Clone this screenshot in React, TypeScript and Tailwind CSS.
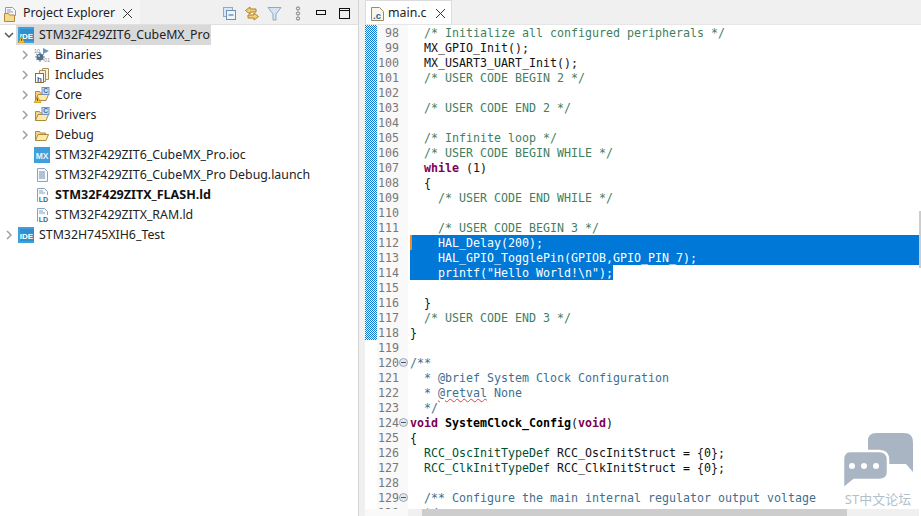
import React from 'react';

const uiFont = 'font-["Noto_Sans","Open_Sans",sans-serif]';

type Tok = [string, string?];

const C = 'text-[#3f7f5f]';
const D = 'text-[#3f6f8f]';
const K = 'font-bold text-[#7f0055]';
const T = 'text-[#005032]';
const B = 'font-bold';

// editor content, line 98 to line 130
const lines: Tok[][] = [
  [['  /* Initialize all configured peripherals */', C]],
  [['  MX_GPIO_Init();']],
  [['  MX_USART3_UART_Init();']],
  [['  /* USER CODE BEGIN 2 */', C]],
  [],
  [['  /* USER CODE END 2 */', C]],
  [],
  [['  /* Infinite loop */', C]],
  [['  /* USER CODE BEGIN WHILE */', C]],
  [['  '], ['while', K], [' (1)']],
  [['  {']],
  [['    /* USER CODE END WHILE */', C]],
  [],
  [['    /* USER CODE BEGIN 3 */', C]],
  [['    HAL_Delay(200);']],
  [['    HAL_GPIO_TogglePin(GPIOB,GPIO_PIN_7);']],
  [['    printf("Hello World!\\n");']],
  [],
  [['  }']],
  [['  /* USER CODE END 3 */', C]],
  [['}']],
  [],
  [['/**', D]],
  [['  * @brief System Clock Configuration', D]],
  [['  * ', D], ['@retval', 'text-[#3f6f8f] underline decoration-wavy decoration-[#e04040] decoration-1'], [' None', D]],
  [['  */', D]],
  [['void', K], [' '], ['SystemClock_Config', B], ['('], ['void', K], [')']],
  [['{']],
  [['  '], ['RCC_OscInitTypeDef', T], [' RCC_OscInitStruct = {0};']],
  [['  '], ['RCC_ClkInitTypeDef', T], [' RCC_ClkInitStruct = {0};']],
  [],
  [['  /** Configure the main internal regulator output voltage', D]],
  [['  */', D]],
];

const folds = [120, 124, 129];

function Chevron({ open }: { open?: boolean }) {
  return (
    <svg width="10" height="10" viewBox="0 0 10 10" fill="none" stroke={open ? '#555' : '#a0a0a0'} strokeWidth="1.5">
      {open ? <path d="M1 3l4 4 4-4" /> : <path d="M3 1l4 4-4 4" />}
    </svg>
  );
}

function Warn() {
  return (
    <g>
      <path d="M3.5 9.5L7 16H0z" fill="#f5c33b" stroke="#a87a10" strokeWidth="0.6" />
      <rect x="3.1" y="11.5" width="0.9" height="2.4" fill="#5a3d00" />
    </g>
  );
}

function IdeIcon({ warn }: { warn?: boolean }) {
  return (
    <svg width="16" height="16" viewBox="0 0 16 16">
      <rect x="0" y="0" width="16" height="16" fill="#3f9fdc" />
      <rect x="2" y="2" width="14" height="12" fill="#2f8fd0" />
      <text x="8.5" y="12" fontSize="8" fontWeight="700" fill="#fff" textAnchor="middle" fontFamily="Liberation Sans, sans-serif">IDE</text>
      {warn && <Warn />}
    </svg>
  );
}

function MxIcon() {
  return (
    <svg width="16" height="16" viewBox="0 0 16 16">
      <rect x="0" y="0" width="16" height="16" fill="#3f9fdc" />
      <text x="8" y="12" fontSize="8.5" fontWeight="700" fill="#e8f4fc" textAnchor="middle" fontFamily="Liberation Sans, sans-serif">MX</text>
    </svg>
  );
}

function BinariesIcon() {
  return (
    <svg width="16" height="16" viewBox="0 0 16 16">
      <text x="0" y="6" fontSize="5.5" fill="#8a8a8a" fontFamily="Liberation Sans, sans-serif">10</text>
      <text x="10" y="15" fontSize="5.5" fill="#8a8a8a" fontFamily="Liberation Sans, sans-serif">01</text>
      <path d="M9 1v6l6-3z" fill="#6f93c0" />
      <circle cx="6" cy="10" r="3.5" fill="#55708a" />
      <path d="M2 7l8 6M2 13l8-6M1 10h10M6 5v10" stroke="#55708a" strokeWidth="0.8" />
      <circle cx="5" cy="9" r="1" fill="#c9d6e2" />
    </svg>
  );
}

function IncludesIcon() {
  return (
    <svg width="16" height="16" viewBox="0 0 16 16">
      <path d="M8.5 1.5h6v11h-6z" fill="#f7efd8" stroke="#a8905a" />
      <path d="M5.5 3.5h6v11h-6z" fill="#f7efd8" stroke="#a8905a" />
      <rect x="1.5" y="6.5" width="8" height="9" fill="#fff" stroke="#8a6f3a" />
      <text x="5.5" y="14.5" fontSize="8" fontWeight="700" fill="#3a5f8a" textAnchor="middle" fontFamily="Liberation Sans, sans-serif">h</text>
    </svg>
  );
}

function FolderIcon({ src, warn }: { src?: boolean; warn?: boolean }) {
  return (
    <svg width="16" height="16" viewBox="0 0 16 16">
      <path d="M1.5 13.5v-9h4l1 1.5h5v2" fill="#f2d58c" stroke="#b08a3a" />
      <path d="M1.5 13.5l2.5-6h10.5l-2.5 6z" fill="#fbe9ae" stroke="#b08a3a" />
      {src && (
        <g>
          <rect x="8" y="0.5" width="7" height="7" fill="#cfe0f2" stroke="#6f93c0" />
          <text x="11.5" y="6.4" fontSize="6.5" fontWeight="700" fill="#3a64a0" textAnchor="middle" fontFamily="Liberation Sans, sans-serif">C</text>
        </g>
      )}
      {warn && <Warn />}
    </svg>
  );
}

function DocIcon() {
  return (
    <svg width="16" height="16" viewBox="0 0 16 16" fill="none">
      <path d="M3.5 1.5h7l3 3v10h-10z" fill="#f6f9fd" stroke="#8ca3bf" />
      <path d="M5 5h6M5 7h6M5 9h6M5 11h6" stroke="#6f87a6" />
    </svg>
  );
}

function LdIcon() {
  return (
    <svg width="16" height="16" viewBox="0 0 16 16" fill="none">
      <path d="M3.5 1.5h7l3 3v10h-10z" fill="#f6f9fd" stroke="#8ca3bf" />
      <path d="M5 4h4M5 6h6" stroke="#8ca3bf" />
      <rect x="4" y="8" width="11" height="8" fill="#fff" />
      <text x="9.5" y="15" fontSize="7" fontWeight="700" fill="#2f6d9e" textAnchor="middle" fontFamily="Liberation Sans, sans-serif">LD</text>
    </svg>
  );
}

function PackageIcon() {
  return (
    <svg width="16" height="16" viewBox="0 0 16 16">
      <path d="M2.5 1.5h7l3 3v5h-10z" fill="#f7f8fb" stroke="#8c9bb0" />
      <path d="M4 4h4M4 6h6" stroke="#8c9bb0" />
      <path d="M1.5 15.5v-8h4l1 1.5h5v6.5z" fill="#f4d98f" stroke="#b08a3a" />
    </svg>
  );
}

function CFileIcon() {
  return (
    <svg width="15" height="16" viewBox="0 0 15 16">
      <path d="M1.5 1.5h8l4 4v9h-12z" fill="#f8f5ea" stroke="#a08c5a" />
      <text x="7" y="12.5" fontSize="9.5" fontWeight="700" fill="#2f5f9a" textAnchor="middle" fontFamily="Liberation Sans, sans-serif">.c</text>
    </svg>
  );
}

function CloseX() {
  return (
    <svg width="11" height="11" viewBox="0 0 11 11" stroke="#333" strokeWidth="1" fill="none">
      <path d="M1 1l9 9M10 1l-9 9" />
    </svg>
  );
}

function Checker({ no }: { no: number }) {
  const id = `chk${no}`;
  return (
    <svg className="block shrink-0" width="12" height="15" shapeRendering="crispEdges">
      <defs>
        <pattern id={id} width="2" height="2" patternUnits="userSpaceOnUse" patternTransform={`translate(0 ${no % 2})`}>
          <rect width="2" height="2" fill="#fff" />
          <rect width="1" height="1" fill="#0a78d2" />
          <rect x="1" y="1" width="1" height="1" fill="#0a78d2" />
        </pattern>
      </defs>
      <rect width="12" height="15" fill={`url(#${id})`} />
    </svg>
  );
}

function TreeRow({ depth, arrow, icon, label, bold, selected }: {
  depth: number;
  arrow?: 'open' | 'closed';
  icon: React.ReactNode;
  label: string;
  bold?: boolean;
  selected?: boolean;
}) {
  return (
    <div className={`flex h-5 items-center ${depth ? 'pl-[20px]' : 'pl-[4px]'}`}>
      <span className="flex w-[12px] shrink-0 items-center">
        {arrow && <Chevron open={arrow === 'open'} />}
      </span>
      <div className={`flex h-5 items-center pl-[2px] pr-[1px] ${selected ? 'bg-[#d9d9d9]' : ''}`}>
        <span className="flex w-[21px] shrink-0 items-center">{icon}</span>
        <span className={`whitespace-pre ${bold ? 'text-[12.55px] font-bold text-[#111]' : 'text-[12.35px] text-[#222]'}`}>{label}</span>
      </div>
    </div>
  );
}

function ProjectExplorer() {
  return (
    <div className={`flex w-[359px] shrink-0 flex-col border-r border-[#d4d4d4] bg-white ${uiFont}`}>
      <div className="flex h-[25px] shrink-0 items-center border-b border-[#e0e0e0] bg-[#f0f0f0]">
        <div className="flex h-full w-[140px] items-center bg-[#f5f5f5] pl-[3px] pt-[3px]">
          <PackageIcon />
          <span className="ml-[4px] whitespace-pre text-[12.35px] text-[#222]">Project Explorer</span>
          <span className="ml-[7px]"><CloseX /></span>
        </div>
        <div className="ml-[82px] flex items-center pt-[2px]">
          <svg width="15" height="15" viewBox="0 0 15 15" fill="none">
            <rect x="1.5" y="1.5" width="9" height="9" fill="#dbe7f4" stroke="#8fa9c8" />
            <rect x="4.5" y="4.5" width="9" height="9" fill="#eef4fb" stroke="#6f8fb8" />
            <path d="M6.5 9h5" stroke="#3f638f" />
          </svg>
          <svg className="ml-[7px]" width="16" height="15" viewBox="0 0 16 15" fill="#f3cf7a" stroke="#b5801f">
            <path d="M6 1L1.5 4.5 6 8V6h6V3H6z" />
            <path d="M10 7l4.5 3.5L10 14v-2H4V9h6z" />
          </svg>
          <svg className="ml-[7px]" width="15" height="15" viewBox="0 0 15 15" fill="#d5e3f2" stroke="#8fa9c8">
            <path d="M1 1.5h13L9 8v6H6V8z" />
          </svg>
          <svg className="ml-[13px]" width="6" height="15" viewBox="0 0 6 15" fill="none" stroke="#777">
            <circle cx="3" cy="2.5" r="1.6" />
            <circle cx="3" cy="7.5" r="1.6" />
            <circle cx="3" cy="12.5" r="1.6" />
          </svg>
          <svg className="ml-[15px]" width="10" height="6" viewBox="0 0 10 6" fill="none" stroke="#111">
            <rect x="0.5" y="0.5" width="9" height="4" />
          </svg>
          <svg className="ml-[13px]" width="11" height="11" viewBox="0 0 11 11" fill="none" stroke="#111">
            <rect x="0.5" y="0.5" width="10" height="10" />
            <path d="M0 2.5h11" />
          </svg>
        </div>
      </div>
      <div className="flex flex-col">
        <TreeRow depth={0} arrow="open" selected icon={<IdeIcon warn />} label="STM32F429ZIT6_CubeMX_Pro" />
        <TreeRow depth={1} arrow="closed" icon={<BinariesIcon />} label="Binaries" />
        <TreeRow depth={1} arrow="closed" icon={<IncludesIcon />} label="Includes" />
        <TreeRow depth={1} arrow="closed" icon={<FolderIcon src warn />} label="Core" />
        <TreeRow depth={1} arrow="closed" icon={<FolderIcon src />} label="Drivers" />
        <TreeRow depth={1} arrow="closed" icon={<FolderIcon />} label="Debug" />
        <TreeRow depth={1} icon={<MxIcon />} label="STM32F429ZIT6_CubeMX_Pro.ioc" />
        <TreeRow depth={1} icon={<DocIcon />} label="STM32F429ZIT6_CubeMX_Pro Debug.launch" />
        <TreeRow depth={1} bold icon={<LdIcon />} label="STM32F429ZITX_FLASH.ld" />
        <TreeRow depth={1} icon={<LdIcon />} label="STM32F429ZITX_RAM.ld" />
        <TreeRow depth={0} arrow="closed" icon={<IdeIcon />} label="STM32H745XIH6_Test" />
      </div>
    </div>
  );
}

function CodeLine({ no, toks }: { no: number; toks: Tok[] }) {
  const full = no === 112 || no === 113;
  const part = no === 114;
  const sel = full || part;
  return (
    <div className="flex h-[15px] shrink-0 leading-[17px]">
      {no <= 118 ? <Checker no={no} /> : <div className="w-[12px] shrink-0" />}
      <div className="relative flex w-[31px] shrink-0 justify-end bg-[#f9f9f9] pr-[9px] text-[#787878]">
        {no}
        {folds.includes(no) && (
          <svg className="absolute right-0 top-[3px]" width="9" height="9" viewBox="0 0 9 9">
            <circle cx="4.5" cy="4.5" r="4" fill="#e4e8ee" stroke="#9aa8b8" />
            <path d="M2 4.5h5" stroke="#44546a" />
          </svg>
        )}
      </div>
      <div className="w-[2px] shrink-0 bg-white" />
      <div className={`relative flex-1 whitespace-pre ${full ? 'bg-[#0078d7]' : ''}`}>
        <span className={part ? 'inline-block h-[15px] bg-[#0078d7] align-top' : ''}>
          {toks.map((t, i) => (
            <span key={i} className={sel ? 'text-white' : t[1] ?? 'text-[#111]'}>{t[0]}</span>
          ))}
        </span>
        {no === 112 && <div className="absolute bottom-0 left-0 top-0 w-[2px] bg-[#f08a24]" />}
      </div>
    </div>
  );
}

function Editor() {
  return (
    <div className="flex min-w-0 flex-1 flex-col bg-white">
      <div className={`flex h-[25px] shrink-0 items-stretch border-b border-[#e6e6e6] bg-[#f0f0f0] ${uiFont}`}>
        <div className="flex w-[87px] items-center border-x border-t border-[#dcdcdc] bg-white pl-[4px] pt-[2px]">
          <CFileIcon />
          <span className="ml-[3px] text-[12.35px] text-[#222]">main.c</span>
          <span className="ml-[8px]"><CloseX /></span>
        </div>
      </div>
      <div className="flex min-h-0 flex-1">
        <div className="flex min-w-0 flex-1 flex-col">
          <div className="flex min-h-0 flex-1 flex-col overflow-hidden font-['DejaVu_Sans_Mono',monospace] text-[11.63px]">
            {lines.map((toks, i) => (
              <CodeLine key={i} no={98 + i} toks={toks} />
            ))}
          </div>
          <div className="flex h-[7px] shrink-0">
            <div className="w-[43px] shrink-0 bg-[#f9f9f9]" />
            <div className="flex flex-1 overflow-hidden bg-[#f0f0f0]">
              <div className="w-[14px] shrink-0" />
              <div className="w-[425px] bg-[#cdcdcd]" />
            </div>
          </div>
        </div>
        <div className="flex w-[2px] shrink-0 flex-col">
          <div className="h-[186px] bg-white" />
          <div className="h-[57px] bg-[#cdcdcd]" />
        </div>
      </div>
    </div>
  );
}

function Watermark() {
  return (
    <div className="absolute bottom-[9px] right-[7px] flex w-[72px] flex-col items-center">
      <svg width="72" height="56" viewBox="0 0 72 56" fill="#aab5c3">
        <path d="M34 0h28q9 0 9 9v30l-7-8H34q-8 0-8-8V8q0-8 8-8z" />
        <path d="M8 18h29q9 0 9 9v12q0 8-9 8H12L1 56V27q0-9 7-9z" stroke="#fff" strokeWidth="2.5" />
        <circle cx="10" cy="33" r="3" fill="#fff" />
        <circle cx="22" cy="33" r="3" fill="#fff" />
        <circle cx="34" cy="33" r="3" fill="#fff" />
      </svg>
      <span className="mt-[2px] whitespace-pre font-['Noto_Sans','Noto_Sans_CJK_SC',sans-serif] text-[13px] leading-[16px] text-[#b4bfcd]">ST中文论坛</span>
    </div>
  );
}

export default function App() {
  return (
    <div className="relative flex h-[516px] w-[921px] overflow-hidden bg-[#f0f0f0]">
      <ProjectExplorer />
      <div className="w-[6px] shrink-0" />
      <Editor />
      <Watermark />
    </div>
  );
}
